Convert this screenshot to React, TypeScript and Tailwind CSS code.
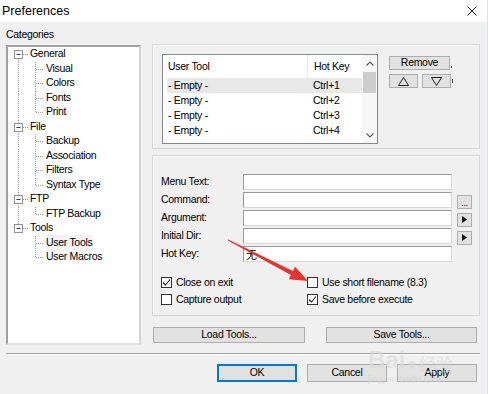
const font = "font-['Liberation_Sans',Arial,sans-serif] text-[10.5px] tracking-[-0.3px] text-black";

const tree = [
  { label: "General", children: ["Visual", "Colors", "Fonts", "Print"] },
  { label: "File", children: ["Backup", "Association", "Filters", "Syntax Type"] },
  { label: "FTP", children: ["FTP Backup"] },
  { label: "Tools", children: ["User Tools", "User Macros"] },
];

const dot = { stroke: "#a0a0a0", strokeDasharray: "1 1", strokeWidth: 1 };

function ParentGlyph({ first, last }: { first: boolean; last: boolean }) {
  return (
    <svg width={21} height={14.5} className="shrink-0">
      {!first && <line x1={10.5} y1={0} x2={10.5} y2={3.5} {...dot} />}
      {!last && <line x1={10.5} y1={11.5} x2={10.5} y2={14.5} {...dot} />}
      <rect x={6.5} y={3.5} width={8} height={8} fill="white" stroke="#919191" />
      <line x1={8.5} y1={7.5} x2={12.5} y2={7.5} stroke="#1f3b8c" />
      <line x1={15} y1={7.5} x2={20} y2={7.5} {...dot} />
    </svg>
  );
}

function ChildGlyph({ root, last }: { root: boolean; last: boolean }) {
  return (
    <svg width={38} height={14.5} className="shrink-0">
      {root && <line x1={10.5} y1={0} x2={10.5} y2={14.5} {...dot} />}
      <line x1={27.5} y1={0} x2={27.5} y2={last ? 7.5 : 14.5} {...dot} />
      <line x1={28} y1={7.5} x2={36} y2={7.5} {...dot} />
    </svg>
  );
}

function Tree() {
  return (
    <div className="h-[300px] mt-[3px] bg-white border-2 border-t-[#a0a0a0] border-l-[#a0a0a0] border-r-[#d4d4d4] border-b-[#e3e3e3]">
      {tree.map((node, i) => {
        const lastRoot = i === tree.length - 1;
        return (
          <div key={node.label}>
            <div className="flex items-center h-[14.5px]">
              <ParentGlyph first={i === 0} last={lastRoot} />
              <span className="ml-px">{node.label}</span>
            </div>
            {node.children.map((c, j) => (
              <div key={c} className="flex items-center h-[14.5px]">
                <ChildGlyph root={!lastRoot} last={j === node.children.length - 1} />
                <span className={c === "User Tools" ? "bg-[#f3f3f3] pr-px" : ""}>{c}</span>
              </div>
            ))}
          </div>
        );
      })}
    </div>
  );
}

function Chevron({ up }: { up?: boolean }) {
  return (
    <svg width={8} height={5}>
      <polyline
        points={up ? "0.5,4.5 4,1 7.5,4.5" : "0.5,0.5 4,4 7.5,0.5"}
        fill="none"
        stroke="#606060"
        strokeWidth={1.2}
      />
    </svg>
  );
}

function ListView() {
  const rows = ["Ctrl+1", "Ctrl+2", "Ctrl+3", "Ctrl+4"];
  return (
    <div className="w-[216px] h-[90px] border border-[#828790] bg-white flex">
      <div className="flex-1 flex flex-col">
        <div className="h-[23px] flex items-center">
          <div className="w-[144px] pl-[5px]">User Tool</div>
          <div className="h-full flex items-center pl-[6px] border-l border-[#ececec]">Hot Key</div>
        </div>
        {rows.map((k, i) => (
          <div key={k} className={`h-[15px] ml-[4px] flex items-center ${i === 0 ? "bg-[#e8e8e8]" : ""}`}>
            <div className="w-[140px] pl-px">- Empty -</div>
            <div className="pl-[6px]">{k}</div>
          </div>
        ))}
      </div>
      <div className="w-[15px] bg-[#f7f7f7] flex flex-col">
        <div className="h-[17px] flex items-center justify-center">
          <Chevron up />
        </div>
        <div className="h-[21px] mx-px bg-[#cdcdcd]" />
        <div className="flex-1" />
        <div className="h-[15px] flex items-center justify-center">
          <Chevron />
        </div>
      </div>
    </div>
  );
}

function Btn({ children, className }: { children?: React.ReactNode; className: string }) {
  return (
    <div className={`bg-[#e1e1e1] border border-[#adadad] flex items-center justify-center ${className}`}>
      {children}
    </div>
  );
}

function Tri({ down }: { down?: boolean }) {
  return (
    <svg width={11} height={9}>
      <polygon
        points={down ? "0.5,0.5 10.5,0.5 5.5,8.5" : "5.5,0.5 10.5,8.5 0.5,8.5"}
        fill="none"
        stroke="#222"
      />
    </svg>
  );
}

function Play() {
  return (
    <svg width={5} height={7}>
      <polygon points="0,0 5,3.5 0,7" fill="#111" />
    </svg>
  );
}

function Check({ on, label }: { on: boolean; label: string }) {
  return (
    <div className="h-[17px] flex items-center">
      <div className="w-[11px] h-[11px] border border-[#333] bg-white flex items-center justify-center shrink-0">
        {on && (
          <svg width={9} height={9}>
            <polyline points="1,4.5 3.5,7 8,1.5" fill="none" stroke="#222" strokeWidth={1.1} />
          </svg>
        )}
      </div>
      <span className="ml-[4px]">{label}</span>
    </div>
  );
}

const fields: { label: string; extra?: "dots" | "play"; value?: string }[] = [
  { label: "Menu Text:" },
  { label: "Command:", extra: "dots" },
  { label: "Argument:", extra: "play" },
  { label: "Initial Dir:", extra: "play" },
  { label: "Hot Key:", value: "无" },
];

export default function App() {
  return (
    <div className={`relative w-[488px] h-[394px] overflow-hidden bg-[#f0f0f0] border-r border-[#d6e4f0] ${font}`}>
      <div className="h-[22px] bg-white flex items-center justify-between pl-[2px] pr-[10px]">
        <span className="text-[12.5px] tracking-normal">Preferences</span>
        <svg width={10} height={10}>
          <path d="M0.5 0.5 L9.5 9.5 M9.5 0.5 L0.5 9.5" stroke="#222" strokeWidth={1} />
        </svg>
      </div>

      <div className="flex pl-[6px]">
        <div className="w-[135px]">
          <div className="h-[14px] mt-[6px] flex items-center">Categories</div>
          <Tree />
        </div>

        <div className="ml-[11px] w-[328px] mt-[22px]">
          <div className="h-[105px] border border-[#d5d5d5] shadow-[inset_1px_1px_0_white] flex pl-[9px] pt-[9px]">
            <ListView />
            <div className="ml-[11px] mt-[2px] flex flex-col gap-[4px]">
              <div className="flex items-end">
                <Btn className="w-[61px] h-[14px]">Remove</Btn>
                <span className="w-px h-[2px] bg-[#444] ml-px mb-[2px]" />
              </div>
              <div className="flex items-center gap-[4px]">
                <Btn className="w-[29px] h-[14px]">
                  <Tri />
                </Btn>
                <Btn className="w-[29px] h-[14px]">
                  <Tri down />
                </Btn>
                <span className="w-px h-[4px] bg-[#444] -ml-[3px]" />
              </div>
            </div>
          </div>

          <div className="mt-[6px] h-[161px] border border-[#d5d5d5] shadow-[inset_1px_1px_0_white] pl-[8px] pt-[18px]">
            <div className="flex flex-col gap-[2px]">
              {fields.map((f) => (
                <div key={f.label} className="flex items-center h-[16px]">
                  <div className="w-[82px]">{f.label}</div>
                  <div className="w-[209px] h-[16px] bg-white border border-[#9a9a9a] border-b-[#d8d8d8] border-r-[#d8d8d8] flex items-center pl-[2px]">
                    {f.value && <span className="font-['Noto_Sans_CJK_SC',sans-serif] text-[11px] leading-none">{f.value}</span>}
                  </div>
                  {f.extra && (
                    <Btn className="ml-[5px] w-[15px] h-[14px] mt-[3px]">
                      {f.extra === "dots" ? <span className="text-[9px] leading-none mt-[3px]">...</span> : <Play />}
                    </Btn>
                  )}
                </div>
              ))}
            </div>
            <div className="mt-[12px] flex">
              <div className="w-[146px]">
                <Check on label="Close on exit" />
                <Check on={false} label="Capture output" />
              </div>
              <div>
                <Check on={false} label="Use short filename (8.3)" />
                <Check on label="Save before execute" />
              </div>
            </div>
          </div>

          <div className="mt-[11px] flex justify-between pl-px pr-[3px]">
            <Btn className="w-[152px] h-[16px]">Load Tools...</Btn>
            <Btn className="w-[151px] h-[16px]">Save Tools...</Btn>
          </div>
        </div>
      </div>

      <div className="mt-[8px] ml-[6px] mr-[7px] h-[2px] border-t border-[#a0a0a0] border-b border-b-white" />

      <div className="mt-[9px] flex justify-end gap-[10px] pr-[10px]">
        <Btn className="w-[80px] h-[18px] !border-[#0078d7] shadow-[inset_0_0_0_1px_#0078d7]">OK</Btn>
        <Btn className="w-[80px] h-[18px]">Cancel</Btn>
        <Btn className="w-[80px] h-[18px]">Apply</Btn>
      </div>

      <div className="absolute left-[368px] top-[348px] pointer-events-none flex flex-col items-start opacity-60">
        <div className="flex items-end text-[#d9d9d9] font-bold text-[24px] leading-none tracking-normal">
          <span>Bai</span>
          <span className="mx-[2px] text-[16px]">●</span>
          <span className="font-['Noto_Sans_CJK_SC',sans-serif] text-[17px] font-normal">经验</span>
        </div>
        <span className="text-[9px] text-[#d0d0d0] tracking-normal mt-[1px]">jingyan.baidu.com</span>
      </div>

      <svg className="absolute left-0 top-0 pointer-events-none" width={488} height={394}>
        <polygon
          points="228.2,239.55 292.9,271 295,266.7 308,281 288.8,279.2 290.9,274.9 227.8,240.45"
          fill="#e8322f"
        />
      </svg>
    </div>
  );
}
